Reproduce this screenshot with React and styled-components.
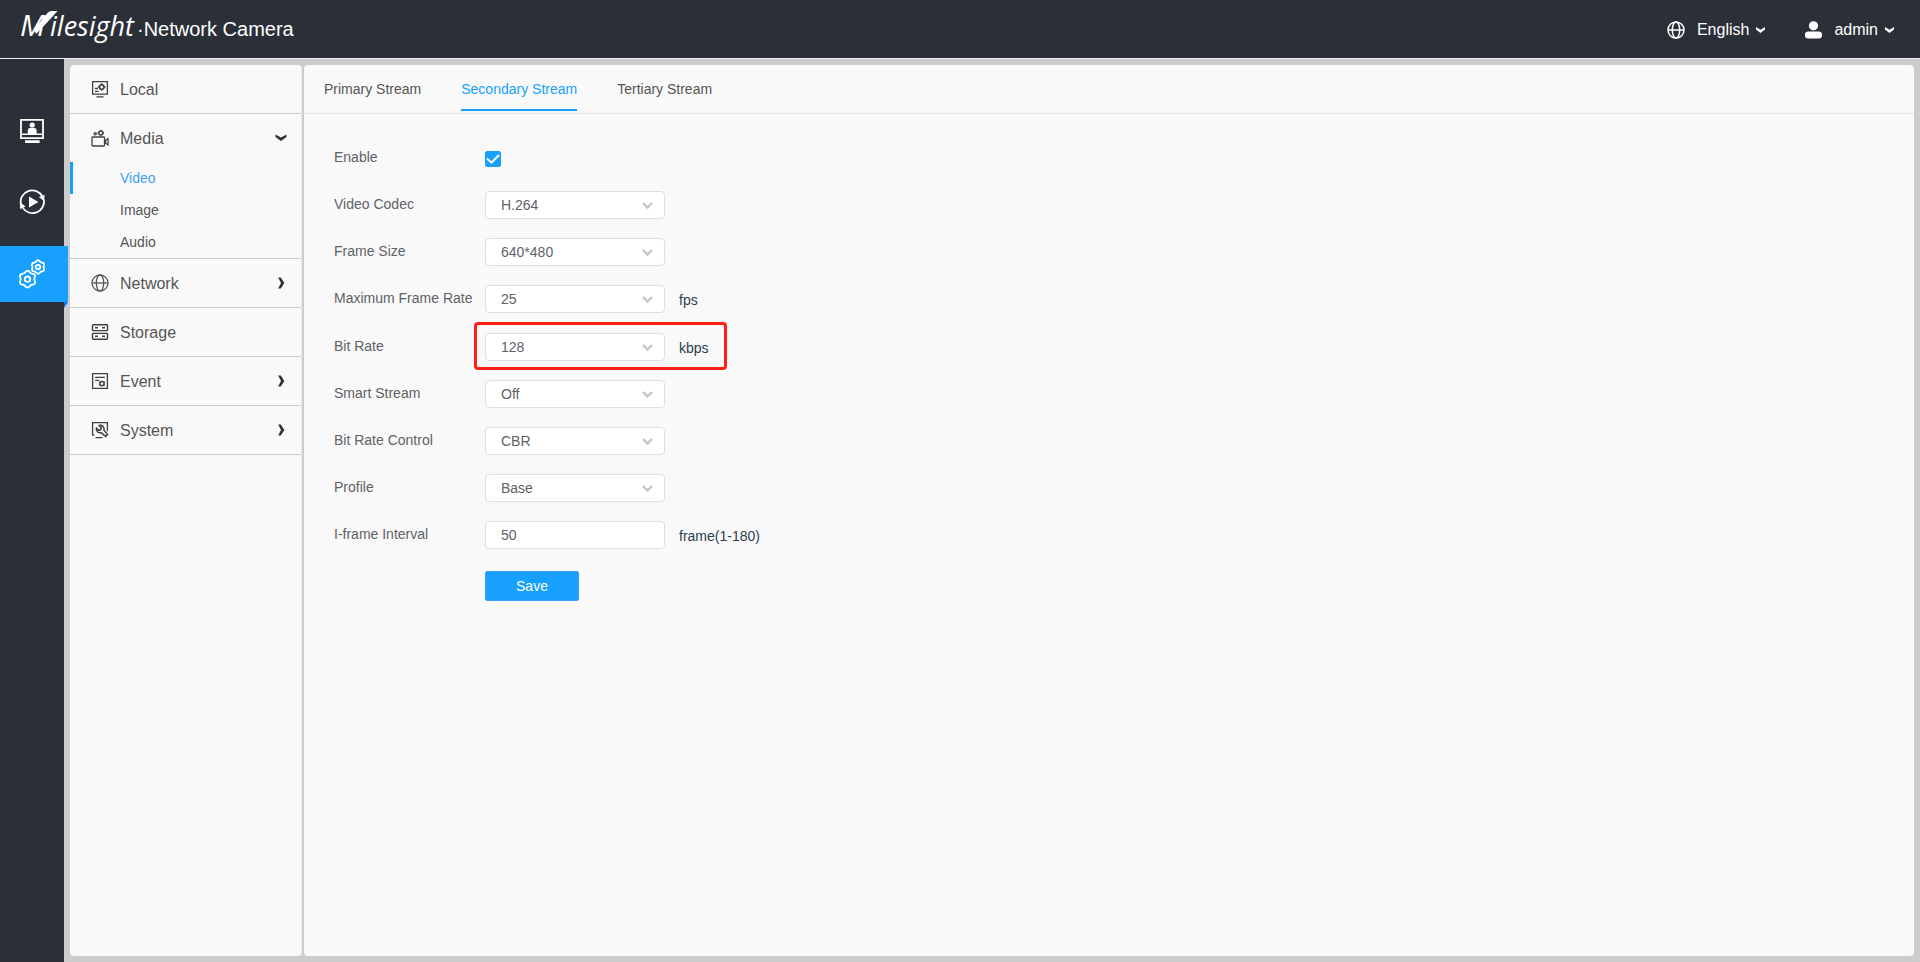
import React, { useState } from 'react'
import styled, { createGlobalStyle } from 'styled-components'

const blue = '#18a0ff'
const dark = '#2b2f38'
const panel = '#f9f9f9'

const GlobalStyle = createGlobalStyle`
  * { box-sizing: border-box; }
  body {
    margin: 0;
    background: #cccccc;
    font-family: "Liberation Sans", Arial, sans-serif;
    font-size: 14px;
    color: #555555;
  }
  button, input, select { font-family: inherit; font-size: inherit; }
  a { color: inherit; text-decoration: none; }
  svg { display: block; flex: none; }
`

const Page = styled.div`
  min-height: 100vh;
  display: flex;
  flex-direction: column;
`
const Header = styled.header`
  height: 59px;
  padding: 0 26px 0 18px;
  display: flex;
  align-items: center;
  justify-content: space-between;
  background: ${dark};
  border-bottom: 1px solid #eeeeee;
  color: #ffffff;
`
const Brand = styled.h1`
  margin: 0;
  display: flex;
  align-items: center;
  font-size: 20px;
  font-weight: 400;
`
const Account = styled.div`
  display: flex;
  gap: 40px;
`
const HeaderButton = styled.button`
  padding: 2px 0 0;
  display: flex;
  align-items: center;
  border: none;
  background: none;
  color: inherit;
  font-size: 16px;
  cursor: pointer;
`
const HeaderText = styled.span`
  margin: 0 7px 0 12px;
`
const Body = styled.div`
  flex: 1;
  display: flex;
`
const Rail = styled.nav`
  width: 64px;
  padding-top: 43px;
  display: flex;
  flex-direction: column;
  gap: 16px;
  background: ${dark};
`
const RailLink = styled.a`
  position: relative;
  width: ${p => (p.$active ? '68px' : '64px')};
  height: 56px;
  padding-left: 18px;
  display: flex;
  align-items: center;
  background: ${p => (p.$active ? blue : 'transparent')};
  color: #ffffff;
  &::after {
    content: "";
    display: ${p => (p.$active ? 'block' : 'none')};
    position: absolute;
    top: 100%;
    right: 0;
    border-top: 6px solid #0a78e0;
    border-right: 4px solid transparent;
  }
`
const Panels = styled.div`
  flex: 1;
  padding: 6px;
  display: flex;
  gap: 2px;
`
const Sidebar = styled.nav`
  width: 232px;
  border-right: 1px solid #eeeeee;
  border-radius: 4px;
  background: ${panel};
`
const MenuGroup = styled.div`
  border-bottom: 1px solid #cccccc;
`
const MenuLink = styled.a`
  height: 48px;
  padding: 0 13px 0 21px;
  display: flex;
  align-items: center;
  gap: 11px;
  font-size: 16px;
`
const MenuText = styled.span`
  flex: 1;
  padding-top: 2px;
`
const SubLink = styled.a`
  display: block;
  padding-left: 47px;
  border-left: 3px solid ${p => (p.$active ? blue : 'transparent')};
  line-height: 32px;
  color: ${p => (p.$active ? '#409eff' : 'inherit')};
`
const Content = styled.main`
  flex: 1;
  border-radius: 4px;
  background: ${panel};
`
const Tabs = styled.div`
  height: 49px;
  padding: 0 20px;
  display: flex;
  align-items: flex-start;
  gap: 40px;
  border-bottom: 1px solid #e4e4e4;
`
const Tab = styled.button`
  height: 46px;
  padding: 4px 0 0;
  border: none;
  border-bottom: 2px solid ${p => (p.$active ? blue : 'transparent')};
  background: none;
  color: ${p => (p.$active ? blue : '#555555')};
  cursor: pointer;
`
const Form = styled.form`
  padding: 30px;
`
const Row = styled.div`
  position: relative;
  height: ${p => (p.$marked ? '29px' : '28px')};
  padding-top: ${p => (p.$marked ? '1px' : '0')};
  margin-bottom: 19px;
  display: flex;
  align-items: center;
  color: #606266;
`
const Label = styled.label`
  width: 151px;
  line-height: 26px;
  align-self: flex-start;
`
const Field = styled.div`
  display: grid;
  align-items: center;
  > * { grid-area: 1 / 1; }
  svg {
    justify-self: end;
    margin-right: 12px;
    pointer-events: none;
  }
`
const control = `
  width: 180px;
  height: 28px;
  margin: 0;
  padding: 0 15px;
  border: 1px solid #dcdfe6;
  border-radius: 4px;
  background: #ffffff;
  color: #606266;
  outline: none;
`
const Select = styled.select`
  ${control}
  appearance: none;
`
const Input = styled.input`
  ${control}
`
const CheckField = styled.div`
  padding-top: 2px;
  display: grid;
  > * { grid-area: 1 / 1; }
  svg {
    pointer-events: none;
    visibility: hidden;
  }
  input:checked + svg { visibility: visible; }
`
const Checkbox = styled.input`
  appearance: none;
  width: 16px;
  height: 16px;
  margin: 0;
  border: 1px solid #dcdfe6;
  border-radius: 2px;
  background: #ffffff;
  &:checked {
    border-color: ${blue};
    background: ${blue};
  }
`
const Unit = styled.span`
  margin-left: 14px;
  padding-top: 1px;
  color: #2c3e50;
`
const Highlight = styled.div`
  position: absolute;
  top: -10px;
  left: 140px;
  width: 253px;
  height: 48px;
  border: 3px solid #ff1f12;
  border-radius: 4px;
  pointer-events: none;
`
const Save = styled.button`
  width: 94px;
  height: 30px;
  margin: 3px 0 0 151px;
  border: 1px solid #409eff;
  border-radius: 2px;
  background: ${blue};
  color: #ffffff;
  cursor: pointer;
`

const Logo = () => (
  <svg width="119" height="42" viewBox="0 0 119 42" overflow="visible" role="img" aria-label="Milesight" fill="#fff">
    <text x="2" y="28" fontFamily="Open Sans, sans-serif" fontSize="30" fontWeight="500" fontStyle="italic">M</text>
    <path d="M16 21.500L29.500 5Q31 3 34 3h5.500L31 12.500 18 26z" />
    <text x="32" y="28" fontFamily="Open Sans, sans-serif" fontSize="27" fontStyle="italic">ilesight</text>
  </svg>
)

const Globe = ({ size, width }) => (
  <svg width={size} height={size} viewBox="0 0 18 18" fill="none" stroke="currentColor" strokeWidth={width}>
    <circle cx="9" cy="9" r="8" />
    <ellipse cx="9" cy="9" rx="3.7" ry="8" />
    <path d="M1 9h16" />
  </svg>
)

const User = () => (
  <svg width="17" height="18" viewBox="0 0 17 18" fill="currentColor">
    <circle cx="8.5" cy="4.8" r="4.6" />
    <rect x="0" y="10.4" width="17" height="7" rx="3.2" />
  </svg>
)

const Caret = () => (
  <svg width="9" height="6" viewBox="0 0 9 6" fill="currentColor">
    <path d="M0 0l4.5 2.7L9 0v2.6L4.5 6 0 2.6z" />
  </svg>
)

const DownArrow = () => (
  <svg width="14" height="10" viewBox="0 0 14 10" fill="#303133">
    <path d="M1.5 1.5L7 4.6l5.5-3.1v2.6L7 8 1.5 4.1z" />
  </svg>
)

const RightArrow = () => (
  <svg width="14" height="12" viewBox="0 0 14 12" fill="#303133">
    <path d="M4.2.4h2.6L10.4 6l-3.6 5.6H4.2L7 6z" />
  </svg>
)

const SelectArrow = () => (
  <svg width="11" height="8" viewBox="0 0 11 8" fill="none" stroke="#c0c4cc" strokeWidth="2.4">
    <path d="M1 2l4.5 4.5L10 2" />
  </svg>
)

const Check = () => (
  <svg width="16" height="16" viewBox="0 0 16 16" fill="none" stroke="#fff" strokeWidth="2">
    <path d="M2 7.5l4.5 4.2L14 4" />
  </svg>
)

const LiveIcon = () => (
  <svg width="28" height="28" viewBox="0 0 28 28" fill="currentColor">
    <path d="M3 3.8h22v18.4H3z" fill="none" stroke="currentColor" strokeWidth="1.8" />
    <circle cx="14.2" cy="9" r="2.6" />
    <path d="M9.8 18v-3.6q0-2.4 2.4-2.4h4q2.4 0 2.4 2.4V18z" />
    <path d="M3 17.5h22v1.6H3zM7 24.2h14.6V27H7z" />
  </svg>
)

const PlaybackIcon = () => (
  <svg width="28" height="28" viewBox="0 0 28 28" fill="none" stroke="currentColor" strokeWidth="1.8">
    <path d="M2.8 16.5A11.6 11.6 0 0 1 24.4 8.6M25.9 11.5A11.6 11.6 0 0 1 4.6 19.6" />
    <path d="M20.8 9l5.8-2.2-.6 6.2zM7.6 18.6L2 21l.2-6.4z" fill="currentColor" stroke="none" />
    <path d="M11 8.4v11.2l9.4-5.6z" fill="currentColor" stroke="none" />
  </svg>
)

// outline of a rounded six-lobed gear
const gearPath = (cx, cy, r) => {
  const pts = []
  for (let i = 0; i <= 72; i++) {
    const a = (i * Math.PI) / 36
    const d = r * (1 + 0.1 * Math.cos(6 * a))
    pts.push(`${(cx + d * Math.sin(a)).toFixed(2)} ${(cy - d * Math.cos(a)).toFixed(2)}`)
  }
  return `M${pts.join('L')}Z`
}

const SettingsIcon = () => (
  <svg width="28" height="30" viewBox="0 0 28 30" fill="none" stroke="currentColor" strokeWidth="1.8">
    <path d={gearPath(9.5, 20.2, 7.6)} />
    <circle cx="9.5" cy="20.2" r="2.7" />
    <path d={gearPath(20, 8, 6.1)} />
    <circle cx="20" cy="8" r="2.2" />
  </svg>
)

const LocalIcon = () => (
  <svg width="18" height="18" viewBox="0 0 18 18" fill="none" stroke="#404040" strokeWidth="1.3">
    <path d="M1.6 1.6h14.8v12.6H1.6z" />
    <circle cx="10.7" cy="7" r="2.3" strokeWidth="1.6" />
    <path d="M10.7 3.2v1.4M10.7 9.4v1.4M6.9 7h1.4M13.1 7h1.4M4 8.5h3M4 11.3h3.6M5.4 16.9h7.2" />
  </svg>
)

const MediaIcon = () => (
  <svg width="18" height="18" viewBox="0 0 18 18" fill="none" stroke="#404040" strokeWidth="1.3">
    <rect x="1" y="8" width="12.5" height="9" rx=".8" />
    <path d="M14.6 11.2L17 9.6v6.2l-2.4-1.6z" />
    <circle cx="4.2" cy="4.8" r="1.1" />
    <circle cx="9.8" cy="4" r="2" strokeWidth="1.5" />
    <path d="M9.8.7v1M9.8 6.3v1M6.5 4h1M12.1 4h1" />
  </svg>
)

const StorageIcon = () => (
  <svg width="18" height="18" viewBox="0 0 18 18" fill="none" stroke="#404040" strokeWidth="1.4">
    <rect x="1.5" y="1.8" width="15" height="5.8" rx=".6" />
    <rect x="1.5" y="10.4" width="15" height="5.8" rx=".6" />
    <path d="M4 4.7h3M11 4.7h3M4 13.3h3M11 13.3h3" />
  </svg>
)

const EventIcon = () => (
  <svg width="18" height="18" viewBox="0 0 18 18" fill="none" stroke="#404040" strokeWidth="1.3">
    <path d="M1.6 1.6h14.8v14.8H1.6zM4.2 5.3h9.6M4.2 8.4h4" />
    <circle cx="11" cy="11.6" r="2.1" strokeWidth="1.5" />
    <path d="M8.2 9.8l1 .6M13.8 13.4l-1-.6M13.8 9.8l-1 .6M8.2 13.4l1-.6" />
  </svg>
)

const SystemIcon = () => (
  <svg width="18" height="18" viewBox="0 0 18 18" fill="none" stroke="#404040" strokeWidth="1.3">
    <path d="M3.4 14.2H1.6V1.6h14.8v8.6M4.5 16.6h7" />
    <path d="M8.2 4.4a3.8 3.8 0 0 1 4.7 4.7l3.6 4.4-1.8 2-4.6-3.8a3.8 3.8 0 0 1-4.7-4.6l2.3 2.2 2-.5.5-2z" strokeWidth="1.5" />
  </svg>
)

const menu = [
  { name: 'Local', icon: <LocalIcon /> },
  { name: 'Media', icon: <MediaIcon />, arrow: <DownArrow />, items: ['Video', 'Image', 'Audio'] },
  { name: 'Network', icon: <Globe size={18} width={1.3} />, arrow: <RightArrow /> },
  { name: 'Storage', icon: <StorageIcon /> },
  { name: 'Event', icon: <EventIcon />, arrow: <RightArrow /> },
  { name: 'System', icon: <SystemIcon />, arrow: <RightArrow /> },
]

const tabs = ['Primary Stream', 'Secondary Stream', 'Tertiary Stream']

const fields = [
  { id: 'codec', label: 'Video Codec', value: 'H.264' },
  { id: 'size', label: 'Frame Size', value: '640*480' },
  { id: 'fps', label: 'Maximum Frame Rate', value: '25', unit: 'fps' },
  { id: 'bitrate', label: 'Bit Rate', value: '128', unit: 'kbps', marked: true },
  { id: 'smart', label: 'Smart Stream', value: 'Off' },
  { id: 'control', label: 'Bit Rate Control', value: 'CBR' },
  { id: 'profile', label: 'Profile', value: 'Base' },
]

const App = () => {
  const [tab, setTab] = useState('Secondary Stream')

  return (
    <Page>
      <GlobalStyle />
      <Header>
        <Brand>
          <Logo />
          <span>·Network Camera</span>
        </Brand>
        <Account>
          <HeaderButton>
            <Globe size={18} width={1.5} />
            <HeaderText>English</HeaderText>
            <Caret />
          </HeaderButton>
          <HeaderButton>
            <User />
            <HeaderText>admin</HeaderText>
            <Caret />
          </HeaderButton>
        </Account>
      </Header>
      <Body>
        <Rail>
          <RailLink href="#live" aria-label="Live view"><LiveIcon /></RailLink>
          <RailLink href="#playback" aria-label="Playback"><PlaybackIcon /></RailLink>
          <RailLink href="#settings" aria-label="Settings" $active><SettingsIcon /></RailLink>
        </Rail>
        <Panels>
          <Sidebar>
            {menu.map(m => (
              <MenuGroup key={m.name}>
                <MenuLink href={`#${m.name}`}>
                  {m.icon}
                  <MenuText>{m.name}</MenuText>
                  {m.arrow}
                </MenuLink>
                {m.items && m.items.map(s => (
                  <SubLink key={s} href={`#${s}`} $active={s === 'Video'}>{s}</SubLink>
                ))}
              </MenuGroup>
            ))}
          </Sidebar>
          <Content>
            <Tabs>
              {tabs.map(t => (
                <Tab key={t} type="button" $active={t === tab} onClick={() => setTab(t)}>{t}</Tab>
              ))}
            </Tabs>
            <Form onSubmit={e => e.preventDefault()}>
              <Row>
                <Label htmlFor="enable">Enable</Label>
                <CheckField>
                  <Checkbox id="enable" type="checkbox" defaultChecked />
                  <Check />
                </CheckField>
              </Row>
              {fields.map(f => (
                <Row key={f.id} $marked={f.marked}>
                  <Label htmlFor={f.id}>{f.label}</Label>
                  <Field>
                    <Select id={f.id} defaultValue={f.value}>
                      <option>{f.value}</option>
                    </Select>
                    <SelectArrow />
                  </Field>
                  {f.unit && <Unit>{f.unit}</Unit>}
                  {f.marked && <Highlight />}
                </Row>
              ))}
              <Row>
                <Label htmlFor="interval">I-frame Interval</Label>
                <Input id="interval" type="text" defaultValue="50" />
                <Unit>frame(1-180)</Unit>
              </Row>
              <Save type="submit">Save</Save>
            </Form>
          </Content>
        </Panels>
      </Body>
    </Page>
  )
}

export default App
